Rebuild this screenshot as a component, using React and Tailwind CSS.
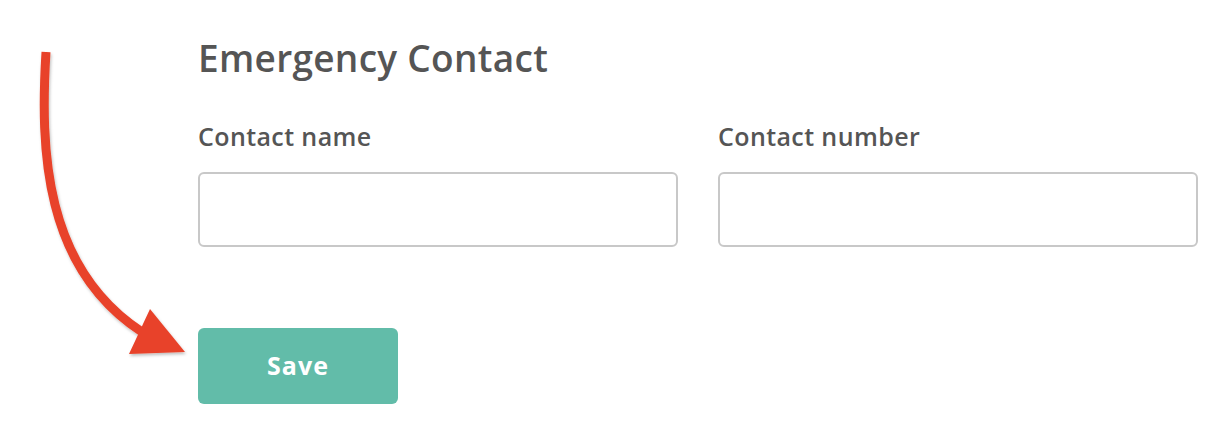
import React from "react";

const Field = ({ label }) => (
    <div className="flex flex-col">
        <label className="text-[25px] leading-none h-[24px] font-semibold text-[#555555] tracking-[0.4px]">{label}</label>
        <input
            type="text"
            className="mt-[24px] h-[75px] w-[480px] rounded-[6px] border-2 border-[#c8c8c8] bg-white px-4 outline-none"
        />
    </div>
);

const Arrow = () => (
    <svg className="absolute left-0 top-0 pointer-events-none" width="240" height="440" viewBox="0 0 240 440">
        <defs>
            <filter id="sh" x="-20%" y="-20%" width="140%" height="140%">
                <feDropShadow dx="1" dy="2" stdDeviation="1.5" floodColor="#000" floodOpacity="0.25" />
            </filter>
        </defs>
        <g filter="url(#sh)">
            <path d="M46 52 C 40 150, 44 268, 142 332" fill="none" stroke="#e8432a" strokeWidth="9" />
            <polygon points="150,309 129,354 185,352" fill="#e8432a" />
        </g>
    </svg>
);

export default function App() {
    return (
        <div className="relative w-full h-[440px] bg-white overflow-hidden" style={{ fontFamily: "'Open Sans', Lato, sans-serif" }}>
            <div className="pl-[198px] pt-[39px]">
                <h2 className="text-[37px] leading-none h-[37px] font-semibold text-[#555555] tracking-[0.3px]">Emergency Contact</h2>
                <div className="mt-[48px] flex gap-[40px]">
                    <Field label="Contact name" />
                    <Field label="Contact number" />
                </div>
                <button className="mt-[81px] h-[76px] w-[200px] rounded-[6px] bg-[#62bca9] text-white text-[25px] font-bold tracking-[1px]">
                    Save
                </button>
            </div>
            <Arrow />
        </div>
    );
}
